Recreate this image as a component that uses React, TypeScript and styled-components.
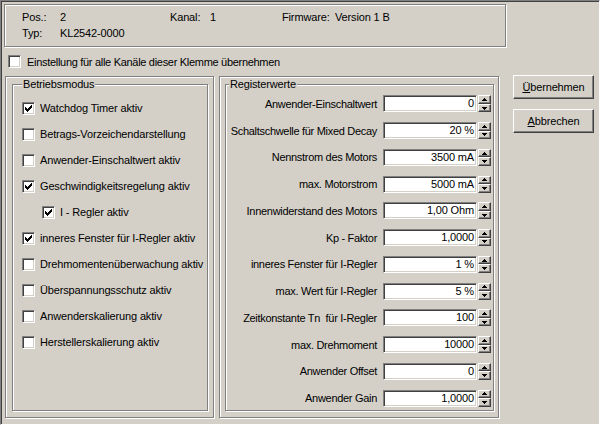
import React from "react";
import styled, { createGlobalStyle } from "styled-components";

const GlobalStyle = createGlobalStyle`
  html, body {
    margin: 0;
    padding: 0;
    background: #d4d0c8;
  }
  body {
    font-family: "Liberation Sans", Arial, sans-serif;
    font-size: 11px;
    letter-spacing: -0.15px;
    color: #000;
  }
  * {
    box-sizing: border-box;
  }
`;

const Frame = styled.div`
  width: 600px;
  height: 425px;
  background: #d4d0c8;
  border: 1px solid;
  border-color: #808080 #fff #fff #808080;
  box-shadow: inset 1px 1px 0 #404040, inset -1px -1px 0 #d4d0c8;
  padding: 3px 0 0 3px;
`;

const etched = `
  border: 1px solid #808080;
  box-shadow: inset 1px 1px 0 #fff, 1px 1px 0 #fff;
`;

const InfoBox = styled.div`
  ${etched}
  width: 502px;
  height: 43px;
  padding: 4px 0 0 17px;
  display: grid;
  grid-template-columns: 38px 110px 40px 72px 53px auto;
  grid-auto-rows: 16px;
  line-height: 16px;
  white-space: nowrap;
`;

const CheckRow = styled.label`
  height: 15px;
  margin-top: 7px;
  padding-left: 4px;
  display: flex;
  align-items: center;
  gap: 6px;
  letter-spacing: -0.3px;
  white-space: nowrap;
`;

const Box = styled.span`
  width: 13px;
  height: 13px;
  flex: none;
  background: #fff;
  border: 1px solid;
  border-color: #808080 #fff #fff #808080;
  box-shadow: inset 1px 1px 0 #404040, inset -1px -1px 0 #d4d0c8;
  position: relative;
  svg {
    position: absolute;
    left: -1px;
    top: -1px;
  }
`;

const Main = styled.div`
  margin: 7px 0 0 1px;
  display: flex;
  align-items: flex-start;
`;

const Panel = styled.div<{ $w: number; $gap: number; $pad: number }>`
  ${etched}
  flex: none;
  width: ${(p) => p.$w}px;
  height: 342px;
  margin-left: ${(p) => p.$gap}px;
  padding: 7px 0 0 ${(p) => p.$pad}px;
`;

const Group = styled.div<{ $w: number }>`
  ${etched}
  position: relative;
  width: ${(p) => p.$w}px;
  height: 327px;
`;

const Legend = styled.span<{ $left: number }>`
  position: absolute;
  top: -7px;
  left: ${(p) => p.$left}px;
  padding: 0 1px;
  line-height: 13px;
  background: #d4d0c8;
  white-space: nowrap;
`;

const CheckList = styled.div`
  padding: 10px 0 0 9px;
  display: flex;
  flex-direction: column;
`;

const CheckItem = styled.label<{ $indent?: boolean }>`
  height: 26px;
  display: flex;
  align-items: center;
  gap: 5px;
  padding-left: ${(p) => (p.$indent ? 20 : 0)}px;
  white-space: nowrap;
`;

const FieldList = styled.div`
  padding: 5.6px 2px 0 0;
  display: flex;
  flex-direction: column;
`;

const FieldRow = styled.div`
  height: 26.75px;
  display: flex;
  align-items: center;
  justify-content: flex-end;
`;

const FieldLabel = styled.span`
  margin-right: 6px;
  letter-spacing: -0.3px;
  white-space: pre;
`;

const ValueBox = styled.div`
  flex: none;
  width: 94px;
  height: 17px;
  background: #fff;
  border: 1px solid;
  border-color: #808080 #fff #fff #808080;
  box-shadow: inset 1px 1px 0 #404040, inset -1px -1px 0 #d4d0c8;
  padding: 0 2px 0 0;
  text-align: right;
  line-height: 15px;
  white-space: nowrap;
`;

const Spinner = styled.div`
  flex: none;
  width: 13px;
  height: 17px;
  margin-left: 1px;
  display: flex;
  flex-direction: column;
`;

const SpinButton = styled.div`
  flex: 1;
  background: #d4d0c8;
  border: 1px solid;
  border-color: #fff #404040 #404040 #fff;
  box-shadow: inset -1px -1px 0 #808080;
  display: flex;
  align-items: center;
  justify-content: center;
`;

const ButtonColumn = styled.div`
  margin: -1px 0 0 14px;
  display: flex;
  flex-direction: column;
  gap: 10px;
`;

const Button = styled.button`
  width: 81px;
  height: 24px;
  padding: 0;
  background: #d4d0c8;
  border: 1px solid;
  border-color: #fff #404040 #404040 #fff;
  box-shadow: inset -1px -1px 0 #808080;
  font: inherit;
  letter-spacing: inherit;
  color: #000;
  u {
    text-decoration-thickness: 1px;
    text-underline-offset: 1px;
  }
`;

function Check({ checked }: { checked?: boolean }) {
  return (
    <Box>
      {checked && (
        <svg width="13" height="13" viewBox="0 0 13 13" shapeRendering="crispEdges">
          <path
            transform="translate(3 3)"
            d="M0 2H1V3H2V4H3V3H4V2H5V1H6V0H7V3H6V4H5V5H4V6H3V7H2V6H1V5H0Z"
            fill="#000"
          />
        </svg>
      )}
    </Box>
  );
}

function Arrow({ down }: { down?: boolean }) {
  return (
    <svg width="5" height="3" viewBox="0 0 5 3" shapeRendering="crispEdges">
      <path d={down ? "M0 0H5L2.5 3Z" : "M2.5 0L5 3H0Z"} fill="#000" />
    </svg>
  );
}

const modes: [string, boolean, boolean?][] = [
  ["Watchdog Timer aktiv", true],
  ["Betrags-Vorzeichendarstellung", false],
  ["Anwender-Einschaltwert aktiv", false],
  ["Geschwindigkeitsregelung aktiv", true],
  ["I - Regler aktiv", true, true],
  ["inneres Fenster für I-Regler aktiv", true],
  ["Drehmomentenüberwachung aktiv", false],
  ["Überspannungsschutz aktiv", false],
  ["Anwenderskalierung aktiv", false],
  ["Herstellerskalierung aktiv", false],
];

const registers: [string, string][] = [
  ["Anwender-Einschaltwert", "0"],
  ["Schaltschwelle für Mixed Decay", "20 %"],
  ["Nennstrom des Motors", "3500 mA"],
  ["max. Motorstrom", "5000 mA"],
  ["Innenwiderstand des Motors", "1,00 Ohm"],
  ["Kp - Faktor", "1,0000"],
  ["inneres Fenster für I-Regler", "1 %"],
  ["max. Wert für I-Regler", "5 %"],
  ["Zeitkonstante Tn  für I-Regler", "100"],
  ["max. Drehmoment", "10000"],
  ["Anwender Offset", "0"],
  ["Anwender Gain", "1,0000"],
];

export default function App() {
  return (
    <>
      <GlobalStyle />
      <Frame>
        <InfoBox>
          <span>Pos.:</span>
          <span>2</span>
          <span>Kanal:</span>
          <span>1</span>
          <span>Firmware:</span>
          <span>Version 1 B</span>
          <span>Typ:</span>
          <span>KL2542-0000</span>
        </InfoBox>

        <CheckRow>
          <Check />
          Einstellung für alle Kanäle dieser Klemme übernehmen
        </CheckRow>

        <Main>
          <Panel $w={209} $gap={0} $pad={6}>
            <Group $w={196}>
              <Legend $left={9}>Betriebsmodus</Legend>
              <CheckList>
                {modes.map(([text, checked, indent]) => (
                  <CheckItem key={text} $indent={indent}>
                    <Check checked={checked} />
                    {text}
                  </CheckItem>
                ))}
              </CheckList>
            </Group>
          </Panel>

          <Panel $w={280} $gap={5} $pad={5}>
            <Group $w={269}>
              <Legend $left={3}>Registerwerte</Legend>
              <FieldList>
                {registers.map(([label, value]) => (
                  <FieldRow key={label}>
                    <FieldLabel>{label}</FieldLabel>
                    <ValueBox>{value}</ValueBox>
                    <Spinner>
                      <SpinButton>
                        <Arrow />
                      </SpinButton>
                      <SpinButton>
                        <Arrow down />
                      </SpinButton>
                    </Spinner>
                  </FieldRow>
                ))}
              </FieldList>
            </Group>
          </Panel>

          <ButtonColumn>
            <Button>
              <u>Ü</u>bernehmen
            </Button>
            <Button>
              <u>A</u>bbrechen
            </Button>
          </ButtonColumn>
        </Main>
      </Frame>
    </>
  );
}
